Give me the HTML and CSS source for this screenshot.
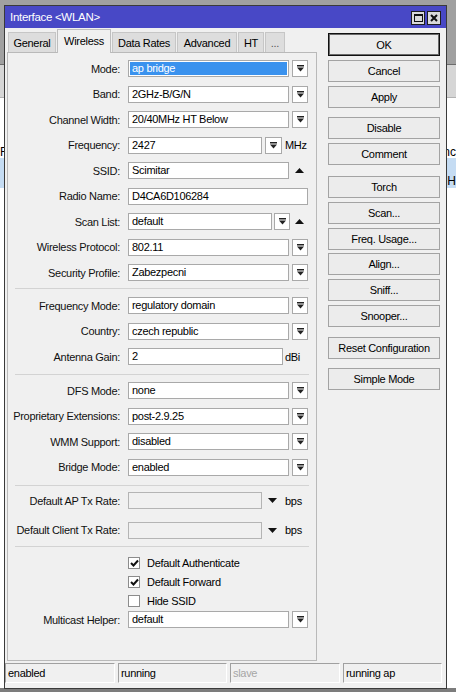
FILE: index.html
```html
<!DOCTYPE html>
<html>
<head>
<meta charset="utf-8">
<title>Interface &lt;WLAN&gt;</title>
<link rel="stylesheet" href="styles.css">
</head>
<body>
<div class="desktop">
  <div class="backwin">
    <div class="bw-top"></div>
    <div class="bw-tool"></div>
    <div class="bw-blank"></div>
    <div class="bw-head"><span>F</span><span>nc</span></div>
    <div class="bw-sel"><span>H</span></div>
    <div class="bw-rest"></div>
    <div class="bw-bottom"></div>
  </div>

  <div class="dialog">
    <div class="titlebar">
      <span class="title">Interface &lt;WLAN&gt;</span>
      <div class="tb-btns">
        <span class="tb-btn"><svg width="9" height="8" viewBox="0 0 9 8"><rect x="0.5" y="0.5" width="8" height="7" fill="none" stroke="#111" stroke-width="1"/><rect x="0" y="0" width="9" height="2" fill="#111"/></svg></span>
        <span class="tb-btn"><svg width="8" height="8" viewBox="0 0 8 8"><path d="M1 1 L7 7 M7 1 L1 7" stroke="#111" stroke-width="2" fill="none"/></svg></span>
      </div>
    </div>

    <div class="main">
      <div class="left">
        <div class="tabs">
          <div class="tab t-general">General</div>
          <div class="tab t-wireless active">Wireless</div>
          <div class="tab t-rates">Data Rates</div>
          <div class="tab t-adv">Advanced</div>
          <div class="tab t-ht">HT</div>
          <div class="tab t-more">...</div>
        </div>
        <div class="panel">
          <div class="group">
            <div class="row"><span class="lbl">Mode:</span><span class="field w161 sel">ap bridge</span><span class="dd"><svg width="7" height="7" viewBox="0 0 7 7"><rect x="0" y="0" width="7" height="1.5" fill="#222"/><polygon points="0,2.5 7,2.5 3.5,6.5" fill="#222"/></svg></span></div>
            <div class="row"><span class="lbl">Band:</span><span class="field w161">2GHz-B/G/N</span><span class="dd"><svg width="7" height="7" viewBox="0 0 7 7"><rect x="0" y="0" width="7" height="1.5" fill="#222"/><polygon points="0,2.5 7,2.5 3.5,6.5" fill="#222"/></svg></span></div>
            <div class="row"><span class="lbl">Channel Width:</span><span class="field w161">20/40MHz HT Below</span><span class="dd"><svg width="7" height="7" viewBox="0 0 7 7"><rect x="0" y="0" width="7" height="1.5" fill="#222"/><polygon points="0,2.5 7,2.5 3.5,6.5" fill="#222"/></svg></span></div>
            <div class="row"><span class="lbl">Frequency:</span><span class="field w134">2427</span><span class="dd dd17"><svg width="7" height="7" viewBox="0 0 7 7"><rect x="0" y="0" width="7" height="1.5" fill="#222"/><polygon points="0,2.5 7,2.5 3.5,6.5" fill="#222"/></svg></span><span class="unit">MHz</span></div>
            <div class="row"><span class="lbl">SSID:</span><span class="field w161">Scimitar</span><span class="up"><svg width="9" height="5" viewBox="0 0 9 5"><polygon points="0,5 9,5 4.5,0" fill="#111"/></svg></span></div>
            <div class="row"><span class="lbl">Radio Name:</span><span class="field w180">D4CA6D106284</span></div>
            <div class="row"><span class="lbl">Scan List:</span><span class="field w144">default</span><span class="dd dd-tight"><svg width="7" height="7" viewBox="0 0 7 7"><rect x="0" y="0" width="7" height="1.5" fill="#222"/><polygon points="0,2.5 7,2.5 3.5,6.5" fill="#222"/></svg></span><span class="up up-tight"><svg width="9" height="5" viewBox="0 0 9 5"><polygon points="0,5 9,5 4.5,0" fill="#111"/></svg></span></div>
            <div class="row"><span class="lbl">Wireless Protocol:</span><span class="field w161">802.11</span><span class="dd"><svg width="7" height="7" viewBox="0 0 7 7"><rect x="0" y="0" width="7" height="1.5" fill="#222"/><polygon points="0,2.5 7,2.5 3.5,6.5" fill="#222"/></svg></span></div>
            <div class="row"><span class="lbl">Security Profile:</span><span class="field w161">Zabezpecni</span><span class="dd"><svg width="7" height="7" viewBox="0 0 7 7"><rect x="0" y="0" width="7" height="1.5" fill="#222"/><polygon points="0,2.5 7,2.5 3.5,6.5" fill="#222"/></svg></span></div>
          </div>
          <div class="sep sep1"></div>
          <div class="group">
            <div class="row"><span class="lbl">Frequency Mode:</span><span class="field w161">regulatory domain</span><span class="dd"><svg width="7" height="7" viewBox="0 0 7 7"><rect x="0" y="0" width="7" height="1.5" fill="#222"/><polygon points="0,2.5 7,2.5 3.5,6.5" fill="#222"/></svg></span></div>
            <div class="row"><span class="lbl">Country:</span><span class="field w161">czech republic</span><span class="dd"><svg width="7" height="7" viewBox="0 0 7 7"><rect x="0" y="0" width="7" height="1.5" fill="#222"/><polygon points="0,2.5 7,2.5 3.5,6.5" fill="#222"/></svg></span></div>
            <div class="row"><span class="lbl">Antenna Gain:</span><span class="field w155">2</span><span class="unit unit-tight">dBi</span></div>
          </div>
          <div class="sep sep2"></div>
          <div class="group">
            <div class="row"><span class="lbl">DFS Mode:</span><span class="field w161">none</span><span class="dd"><svg width="7" height="7" viewBox="0 0 7 7"><rect x="0" y="0" width="7" height="1.5" fill="#222"/><polygon points="0,2.5 7,2.5 3.5,6.5" fill="#222"/></svg></span></div>
            <div class="row"><span class="lbl">Proprietary Extensions:</span><span class="field w161">post-2.9.25</span><span class="dd"><svg width="7" height="7" viewBox="0 0 7 7"><rect x="0" y="0" width="7" height="1.5" fill="#222"/><polygon points="0,2.5 7,2.5 3.5,6.5" fill="#222"/></svg></span></div>
            <div class="row"><span class="lbl">WMM Support:</span><span class="field w161">disabled</span><span class="dd"><svg width="7" height="7" viewBox="0 0 7 7"><rect x="0" y="0" width="7" height="1.5" fill="#222"/><polygon points="0,2.5 7,2.5 3.5,6.5" fill="#222"/></svg></span></div>
            <div class="row"><span class="lbl">Bridge Mode:</span><span class="field w161">enabled</span><span class="dd"><svg width="7" height="7" viewBox="0 0 7 7"><rect x="0" y="0" width="7" height="1.5" fill="#222"/><polygon points="0,2.5 7,2.5 3.5,6.5" fill="#222"/></svg></span></div>
          </div>
          <div class="sep sep3"></div>
          <div class="group group-rates">
            <div class="row"><span class="lbl">Default AP Tx Rate:</span><span class="field w134 off"></span><span class="down"><svg width="9" height="5" viewBox="0 0 9 5"><polygon points="0,0 9,0 4.5,5" fill="#111"/></svg></span><span class="unit unit-bps">bps</span></div>
            <div class="row"><span class="lbl">Default Client Tx Rate:</span><span class="field w134 off"></span><span class="down"><svg width="9" height="5" viewBox="0 0 9 5"><polygon points="0,0 9,0 4.5,5" fill="#111"/></svg></span><span class="unit unit-bps">bps</span></div>
          </div>
          <div class="sep sep4"></div>
          <div class="checks">
            <div class="cb"><span class="box"><svg width="9" height="8" viewBox="0 0 9 8"><path d="M1 4 L3.5 6.5 L8 1.5" stroke="#111" stroke-width="2" fill="none"/></svg></span>Default Authenticate</div>
            <div class="cb"><span class="box"><svg width="9" height="8" viewBox="0 0 9 8"><path d="M1 4 L3.5 6.5 L8 1.5" stroke="#111" stroke-width="2" fill="none"/></svg></span>Default Forward</div>
            <div class="cb"><span class="box"></span>Hide SSID</div>
          </div>
          <div class="row row-mcast"><span class="lbl">Multicast Helper:</span><span class="field w161">default</span><span class="dd"><svg width="7" height="7" viewBox="0 0 7 7"><rect x="0" y="0" width="7" height="1.5" fill="#222"/><polygon points="0,2.5 7,2.5 3.5,6.5" fill="#222"/></svg></span></div>
        </div>
      </div>

      <div class="buttons">
        <div class="btn ok">OK</div>
        <div class="btn">Cancel</div>
        <div class="btn">Apply</div>
        <div class="btn mt9">Disable</div>
        <div class="btn">Comment</div>
        <div class="btn mt11">Torch</div>
        <div class="btn">Scan...</div>
        <div class="btn mt35">Freq. Usage...</div>
        <div class="btn mt35">Align...</div>
        <div class="btn">Sniff...</div>
        <div class="btn">Snooper...</div>
        <div class="btn mt10">Reset Configuration</div>
        <div class="btn mt9">Simple Mode</div>
      </div>
    </div>

    <div class="status">
      <div class="cell c1">enabled</div>
      <div class="cell c2">running</div>
      <div class="cell c3 dim">slave</div>
      <div class="cell c4">running ap</div>
    </div>
  </div>
</div>
</body>
</html>
```
FILE: styles.css
```css
* { box-sizing: border-box; }
html, body { margin: 0; padding: 0; }
body {
  width: 456px;
  height: 692px;
  overflow: hidden;
  font-family: "Liberation Sans", Arial, sans-serif;
  font-size: 11px;
  letter-spacing: -0.3px;
  color: #000;
}
.desktop { position: relative; width: 456px; height: 692px; overflow: hidden; background: #fff; }

/* window behind */
.backwin { display: flex; flex-direction: column; height: 100%; }
.bw-top { height: 65px; background: #a0a0a0; border-bottom: 1px solid #6c6c6c; flex: none; }
.bw-tool { height: 33px; background: #d6d6d6; border-bottom: 1px solid #b2b2b2; flex: none; }
.bw-blank { height: 48px; background: #fff; flex: none; }
.bw-head { height: 12px; display: flex; justify-content: space-between; align-items: center; font-size: 12px; letter-spacing: 0; flex: none; }
.bw-sel { height: 30px; background: #c5dcf3; display: flex; justify-content: flex-end; align-items: flex-end; font-size: 12px; letter-spacing: 0; flex: none; }
.bw-rest { flex: 1; background: #fff; }
.bw-bottom { height: 4px; background: #7c7c7c; flex: none; }

/* dialog */
.dialog {
  position: absolute;
  left: 4px;
  top: 5px;
  width: 443px;
  height: 684px;
  background: #f0f0f0;
  border: 1px solid #3a3a3a;
  display: flex;
  flex-direction: column;
}
.titlebar {
  height: 22px;
  flex: none;
  background: #4848c6;
  color: #fff;
  display: flex;
  align-items: center;
  justify-content: space-between;
  padding: 0 5px;
}
.title { font-size: 11.5px; }
.tb-btns { display: flex; gap: 2px; margin-top: 2px; }
.tb-btn {
  width: 14px;
  height: 14px;
  background: #dadada;
  border: 1px solid #1e1e1e;
  display: flex;
  align-items: center;
  justify-content: center;
}

.main { flex: 1; min-height: 0; display: flex; gap: 11px; padding: 1px 6px 0 2px; }
.left { width: 310px; flex: none; display: flex; flex-direction: column; }

.tabs { height: 23px; flex: none; display: flex; align-items: flex-end; gap: 1px; padding-left: 1px; position: relative; z-index: 1; }
.tab {
  height: 20px;
  background: #dddddd;
  border: 1px solid #c6c6c6;
  border-bottom: none;
  display: flex;
  align-items: center;
  justify-content: center;
  white-space: nowrap;
}
.tab.active { height: 24px; margin-bottom: -1px; background: #f0f0f0; border-color: #bdbdbd; padding-bottom: 2px; }
.t-general { width: 48px; }
.t-wireless { width: 54px; }
.t-rates { width: 64px; }
.t-adv { width: 60px; }
.t-ht { width: 26px; }
.t-more { width: 20px; color: #555; }

.panel {
  flex: 1;
  background: #f0f0f0;
  border: 1px solid #b9b9b9;
  padding: 7px 0 0 0;
  display: flex;
  flex-direction: column;
}
.group { display: flex; flex-direction: column; gap: 8.5px; flex: none; }
.group-rates { gap: 12.5px; }
.row { display: flex; align-items: center; height: 17px; flex: none; }
.lbl { width: 112px; margin-right: 8px; text-align: right; white-space: nowrap; flex: none; color: #111; }
.field {
  height: 17px;
  flex: none;
  background: #fff;
  border: 1px solid #a9a9a9;
  padding: 0 3px;
  line-height: 15px;
  white-space: nowrap;
  overflow: hidden;
}
.field.sel { background: #3a92ee; color: #fff; box-shadow: inset 0 0 0 1px #fff; }
.field.off { background: #f0f0f0; border-color: #b4b4b4; }
.w161 { width: 161px; }
.w134 { width: 134px; }
.w180 { width: 180px; }
.w144 { width: 144px; }
.w155 { width: 155px; }
.dd {
  width: 16px;
  height: 17px;
  flex: none;
  margin-left: 3px;
  background: #fff;
  border: 1px solid #a9a9a9;
  display: flex;
  align-items: center;
  justify-content: center;
}
.dd17 { width: 17px; }
.dd-tight { margin-left: 2px; }
.up { display: flex; margin-left: 6px; }
.up-tight { margin-left: 5px; }
.down { display: flex; margin-left: 6px; }
.unit { margin-left: 3px; white-space: nowrap; }
.unit-tight { margin-left: 2px; }
.unit-bps { margin-left: 8px; }

.sep { height: 1px; flex: none; background: #d3d3d3; margin-left: 7px; margin-right: 7px; }
.sep1 { margin-top: 7px; margin-bottom: 8px; }
.sep2 { margin-top: 9px; margin-bottom: 7px; }
.sep3 { margin-top: 9.5px; margin-bottom: 6px; }
.sep4 { margin-top: 7.5px; margin-bottom: 9px; }

.checks { display: flex; flex-direction: column; gap: 6px; padding-left: 120px; flex: none; }
.cb { display: flex; align-items: center; height: 13px; white-space: nowrap; }
.box {
  width: 12px;
  height: 12px;
  flex: none;
  margin-right: 7px;
  background: #fff;
  border: 1px solid #8c8c8c;
  display: flex;
  align-items: center;
  justify-content: center;
}
.row-mcast { margin-top: 4px; }

/* buttons */
.buttons { width: 112px; flex: none; display: flex; flex-direction: column; padding-top: 4px; }
.btn {
  height: 22px;
  flex: none;
  margin-top: 4px;
  background: #ececec;
  border: 1px solid #a3a3a3;
  display: flex;
  align-items: center;
  justify-content: center;
  white-space: nowrap;
}
.btn.ok { height: 23px; margin-top: 0; border-color: #111; box-shadow: inset 0 0 0 1px #6a6a6a; }
.btn.mt9 { margin-top: 9px; }
.btn.mt10 { margin-top: 10px; }
.btn.mt11 { margin-top: 11px; }
.btn.mt35 { margin-top: 3.5px; }

/* status bar */
.status { height: 20px; flex: none; margin: 2px 0 5px 0; padding-right: 4px; display: flex; gap: 3px; }
.cell {
  border-top: 1px solid #a0a0a0;
  border-left: 1px solid #a0a0a0;
  border-right: 1px solid #fff;
  border-bottom: 1px solid #fff;
  padding-left: 2px;
  display: flex;
  align-items: center;
  white-space: nowrap;
}
.c1 { width: 110px; }
.c2 { width: 109px; }
.c3 { width: 110px; }
.c4 { flex: 1; }
.dim { color: #a6a6a6; }
```
